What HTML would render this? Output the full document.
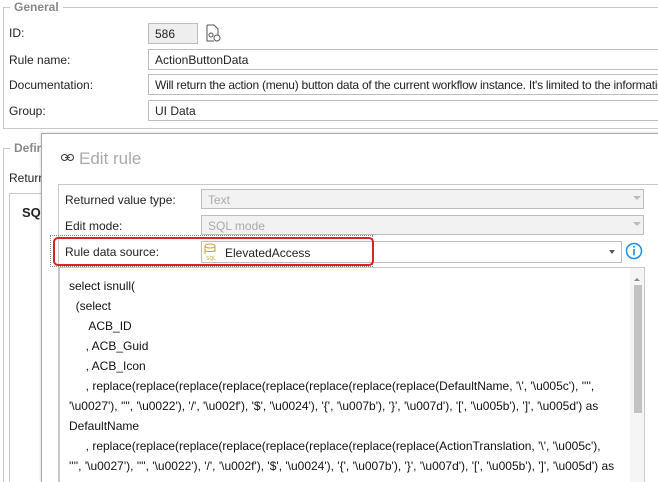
<!DOCTYPE html>
<html><head><meta charset="utf-8"><style>
*{box-sizing:border-box;margin:0;padding:0}
html,body{width:658px;height:482px;overflow:hidden}
body{background:#fff;font-family:"Liberation Sans",sans-serif;font-size:12px;color:#222}
#w{position:relative;width:658px;height:482px;overflow:hidden}
.a{position:absolute;white-space:nowrap}
.inp{position:absolute;border:1px solid #bdbdbd;background:#fff;height:21px;padding:3px 6px;white-space:nowrap;overflow:hidden}
.dis{background:#f2f2f2;color:#aaa}
.code div{height:20px;line-height:20px}
</style></head><body><div id="w">
<div class="a" style="left:3px;top:7px;width:655px;height:122px;border:1px solid #c8c8c8;border-right:none"></div>
<div class="a" style="left:10px;top:0px;background:#fff;padding:0 4px;color:#888;font-weight:bold;font-size:12px">General</div>
<div class="a" style="left:9px;top:26px">ID:</div>
<div class="a" style="left:9px;top:53px">Rule name:</div>
<div class="a" style="left:9px;top:78px">Documentation:</div>
<div class="a" style="left:9px;top:104px">Group:</div>
<div class="inp" style="left:148px;top:23px;width:50px;background:#eee">586</div>
<svg class="a" style="left:205px;top:24px" width="18" height="19" viewBox="0 0 18 19"><path d="M2 1h7l4 4v6M2 1v16h7" fill="none" stroke="#555"/><circle cx="6" cy="11" r="2" fill="none" stroke="#555"/><circle cx="12" cy="14" r="3" fill="none" stroke="#555"/></svg>
<div class="inp" style="left:148px;top:49px;width:510px;border-right:none">ActionButtonData</div>
<div class="inp" style="left:148px;top:74px;width:510px;border-right:none;letter-spacing:-0.25px">Will return the action (menu) button data of the current workflow instance. It's limited to the information w</div>
<div class="inp" style="left:148px;top:100px;width:510px;border-right:none">UI Data</div>
<div class="a" style="left:3px;top:148px;width:655px;height:334px;border:1px solid #c8c8c8;border-right:none;border-bottom:none"></div>
<div class="a" style="left:10px;top:141px;background:#fff;padding:0 4px;color:#888;font-weight:bold">Defin</div>
<div class="a" style="left:9px;top:171px">Return</div>
<div class="a" style="left:9px;top:193px;width:40px;height:289px;border:1px solid #c8c8c8;border-bottom:none"></div>
<div class="a" style="left:22px;top:205px;font-weight:bold;font-size:13px">SQL</div>
<div class="a" style="left:41px;top:133px;width:617px;height:349px;background:#fff;border:1px solid #a8a8a8;border-right:none;border-bottom:none;box-shadow:0 0 3px rgba(0,0,0,.2)"></div>
<svg class="a" style="left:61px;top:154px" width="14" height="8" viewBox="0 0 14 8"><rect x="0.5" y="0.5" width="6" height="6" rx="3" fill="#fff" stroke="#333"/><rect x="6.5" y="0.5" width="6" height="6" rx="3" fill="none" stroke="#333"/><path d="M4 3.5h5" stroke="#d00"/></svg>
<div class="a" style="left:79px;top:149px;font-size:17px;color:#aaa">Edit rule</div>
<div class="a" style="left:58px;top:184px;width:600px;height:298px;border:1px solid #c8c8c8;border-right:none;border-bottom:none"></div>
<div class="a" style="left:65px;top:193px">Returned value type:</div>
<div class="inp dis" style="left:201px;top:189px;width:443px;height:20px;padding-top:3px">Text</div>
<div class="a" style="left:633px;top:196px;border:4px solid transparent;border-top:4px solid #bbb"></div>
<div class="a" style="left:65px;top:219px">Edit mode:</div>
<div class="inp dis" style="left:201px;top:215px;width:443px;height:20px;padding-top:3px">SQL mode</div>
<div class="a" style="left:633px;top:222px;border:4px solid transparent;border-top:4px solid #bbb"></div>
<div class="a" style="left:50px;top:235px;width:323px;height:32px;border:1px dotted #888"></div>
<div class="a" style="left:65px;top:245px">Rule data source:</div>
<div class="inp" style="left:201px;top:241px;width:421px;height:22px"></div>
<div class="a" style="left:609px;top:250px;border:3.5px solid transparent;border-top:4px solid #555"></div>
<svg class="a" style="left:203px;top:243px" width="16" height="18" viewBox="0 0 16 18"><ellipse cx="7" cy="3" rx="5" ry="2" fill="none" stroke="#c9a227"/><path d="M2 3v8M12 3v6M2 7c0 2 10 2 10 0" fill="none" stroke="#c9a227"/><text x="3" y="17" font-size="5" fill="#c9a227" font-family="Liberation Sans">SQL</text></svg>
<div class="a" style="left:225px;top:246px">ElevatedAccess</div>
<div class="a" style="left:53px;top:237px;width:321px;height:29px;border:2px solid #e02020;border-radius:5px"></div>
<svg class="a" style="left:625px;top:242px" width="18" height="18" viewBox="0 0 18 18"><circle cx="9" cy="9" r="7.5" fill="none" stroke="#1e90e0" stroke-width="1.5"/><rect x="8.2" y="7" width="1.6" height="6.5" fill="#1e90e0"/><circle cx="9" cy="4.8" r="1" fill="#1e90e0"/></svg>
<div class="a" style="left:59px;top:267px;width:586px;height:215px;border:1px solid #c8c8c8;border-bottom:none;background:#fff;overflow:hidden">
<div class="a" style="left:570px;top:0;width:14px;height:215px;background:#f5f5f5"></div>
<div class="a" style="left:574px;top:7px;border:3px solid transparent;border-bottom:3px solid #888"></div>
<div class="a" style="left:574px;top:17px;width:8px;height:128px;background:#c2c2c2"></div>
<div class="a code" style="left:9px;top:8px;color:#111">
<div>select isnull(</div>
<div>&nbsp; (select</div>
<div>&nbsp; &nbsp; &nbsp; ACB_ID</div>
<div>&nbsp; &nbsp; &nbsp;, ACB_Guid</div>
<div>&nbsp; &nbsp; &nbsp;, ACB_Icon</div>
<div>&nbsp; &nbsp; &nbsp;, replace(replace(replace(replace(replace(replace(replace(replace(DefaultName, '\', '\u005c'), '''',</div>
<div>'\u0027'), '"', '\u0022'), '/', '\u002f'), '$', '\u0024'), '{', '\u007b'), '}', '\u007d'), '[', '\u005b'), ']', '\u005d') as</div>
<div>DefaultName</div>
<div>&nbsp; &nbsp; &nbsp;, replace(replace(replace(replace(replace(replace(replace(replace(ActionTranslation, '\', '\u005c'),</div>
<div>'''', '\u0027'), '"', '\u0022'), '/', '\u002f'), '$', '\u0024'), '{', '\u007b'), '}', '\u007d'), '[', '\u005b'), ']', '\u005d') as</div>
</div>
</div>
</div></body></html>
